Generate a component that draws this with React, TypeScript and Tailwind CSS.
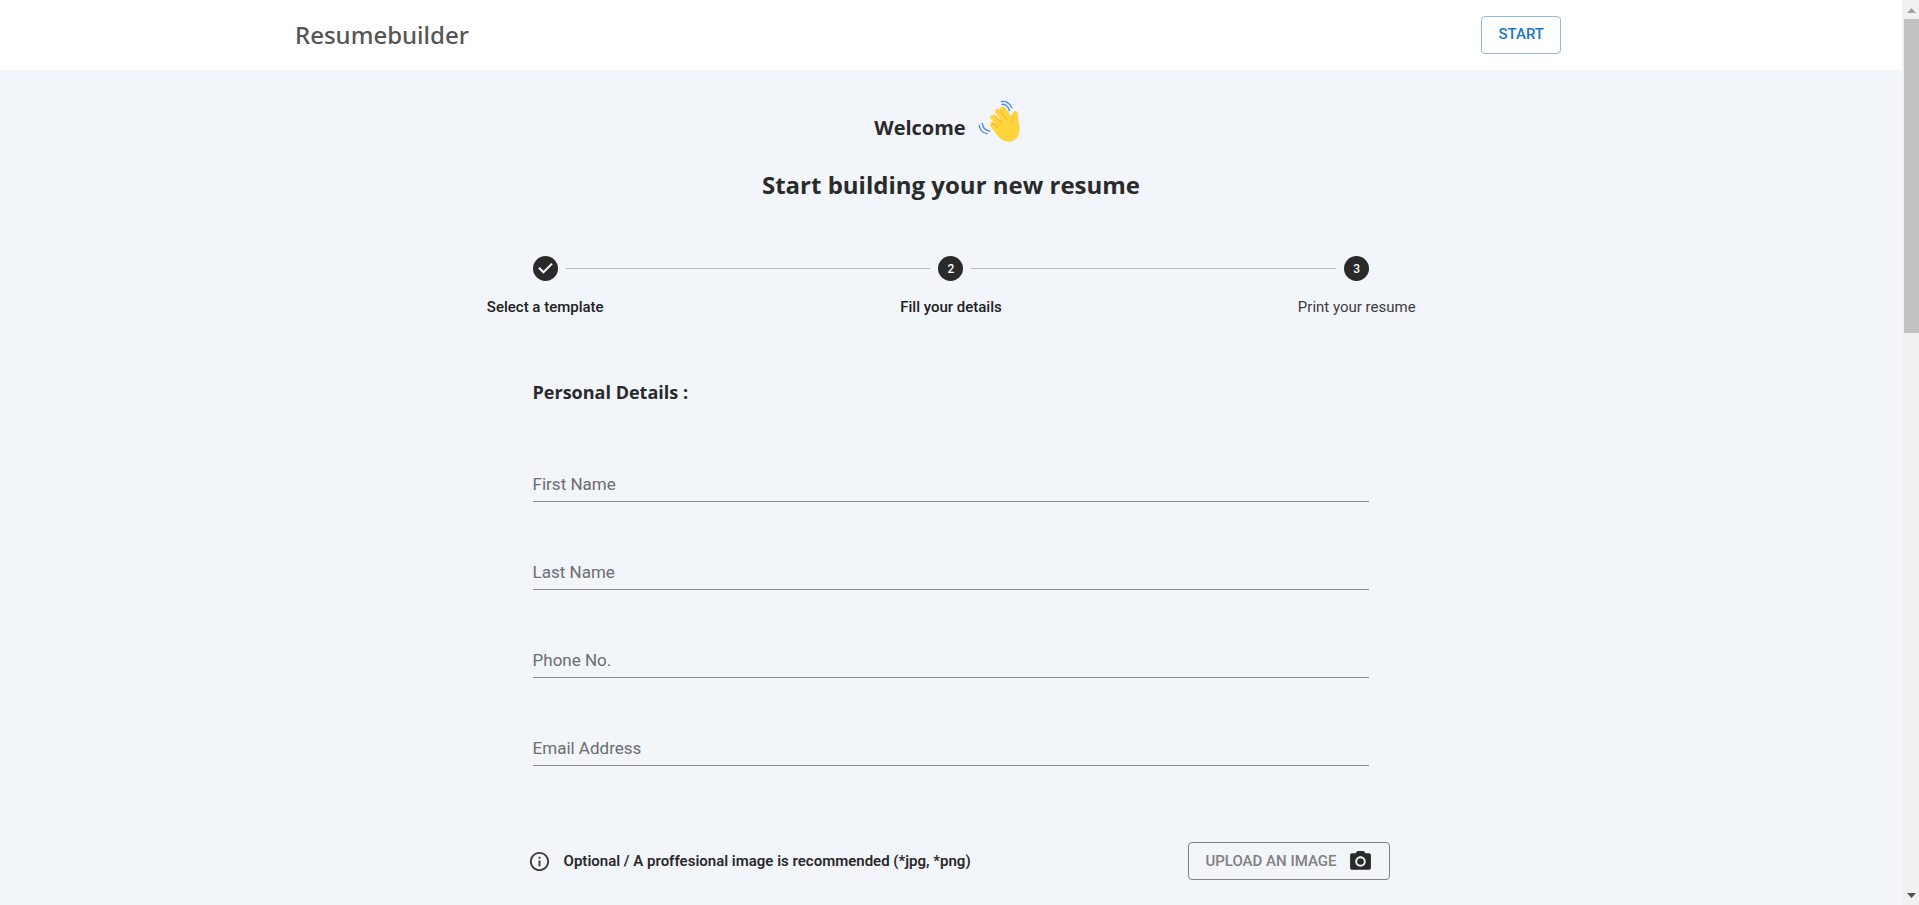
import { MdCameraAlt, MdInfoOutline } from "react-icons/md";

function WavingHand() {
  return (
    <svg viewBox="24 28 132 132" className="size-11" aria-hidden="true" fill="none" strokeLinecap="round">
      <g stroke="#ffd43d" strokeWidth="16">
        <path d="M68 106 104 138" />
        <path d="M69 84 112 124" />
        <path d="M83 66 122 112" />
        <path d="M99 58 130 104" />
        <path d="M136 72 138 112" />
      </g>
      <path
        d="M64 112 90 86 124 82 128 100C126 86 130 78 134 76L144 80C143 95 150 106 149 122C148 144 133 157 113 156C96 155 84 142 64 112Z"
        fill="#ffd43d"
      />
      <g stroke="#ffb62e" strokeWidth="4">
        <path d="M66 99 82 113" />
        <path d="M75 79 93 98" />
        <path d="M90 62 107 86" />
        <path d="M128 76C125 84 127 93 125 98" />
      </g>
      <g stroke="#4a8af4" strokeWidth="4">
        <path d="M94 36C106 33 120 41 126 54" />
        <path d="M96 44C106 42 115 51 118 63" />
        <path d="M28 107C28 119 38 131 52 132" />
        <path d="M37 101C38 113 47 122 59 125" />
      </g>
    </svg>
  );
}

const steps = ["Select a template", "Fill your details", "Print your resume"];

function StepIcon({ index }: { index: number }) {
  if (index === 0) {
    return (
      <svg viewBox="0 0 24 24" className="size-[25px]" fill="#2a2a2a" aria-hidden="true">
        <path d="M12 0a12 12 0 1 0 0 24 12 12 0 0 0 0-24zm-2 17l-5-5 1.4-1.4 3.6 3.6 7.6-7.6L19 8l-9 9z" />
      </svg>
    );
  }
  return (
    <span className="flex size-[25px] items-center justify-center rounded-full bg-[#2a2a2a] text-xs font-medium text-white">
      {index + 1}
    </span>
  );
}

function Stepper() {
  return (
    <ol className="mx-auto mt-[53px] grid w-[64%] grid-cols-3">
      {steps.map((label, i) => (
        <li key={label} className="flex flex-col items-center gap-4">
          <div className="flex w-full items-center gap-2">
            <span className={i > 0 ? "h-px flex-1 bg-[#b6bdbf]" : "h-px flex-1"} />
            <StepIcon index={i} />
            <span className={i < 2 ? "h-px flex-1 bg-[#b6bdbf]" : "h-px flex-1"} />
          </div>
          <span className={i < 2 ? "text-[15px] leading-5 font-medium text-[#212121]" : "text-[15px] leading-5 text-[#3c3c3c]"}>
            {label}
          </span>
        </li>
      ))}
    </ol>
  );
}

const fields = [
  { id: "firstName", label: "First Name", type: "text" },
  { id: "lastName", label: "Last Name", type: "text" },
  { id: "phone", label: "Phone No.", type: "tel" },
  { id: "email", label: "Email Address", type: "email" },
];

function Scrollbar() {
  return (
    <div className="sticky top-0 flex h-screen w-[17px] shrink-0 flex-col items-end bg-[#f1f1f1]" aria-hidden="true">
      <svg viewBox="0 0 15 19" className="h-[19px] w-[15px]" fill="#a3a3a3">
        <path d="M3 13 7.500 8 12 13Z" />
      </svg>
      <div className="h-[314px] w-[15px] bg-[#c1c1c1]" />
      <svg viewBox="0 0 15 17" className="mt-auto h-[17px] w-[15px]" fill="#505050">
        <path d="M3 5 7.500 10 12 5Z" />
      </svg>
    </div>
  );
}

export default function App() {
  return (
    <div className="flex min-h-screen bg-[#f2f5fa] font-['Roboto',sans-serif] text-[#2a2a2a]">
      <div className="min-w-0 flex-1">
        <header className="flex h-[70px] items-center justify-between bg-white pr-[341px] pl-[295px]">
          <a href="#" className="font-['Noto_Sans',sans-serif] text-2xl font-medium text-[#555]">
            Resumebuilder
          </a>
          <button className="h-[38px] rounded border border-[#8cbae8] px-4 pb-0.5 text-[15px] font-medium text-[#1976d2]">
            START
          </button>
        </header>

        <main>
          <div className="mt-[29px] flex items-center justify-center gap-3 pr-1.5 font-['Open_Sans',sans-serif]">
            <p className="pt-3.5 text-xl font-bold">Welcome</p>
            <WavingHand />
          </div>
          <h1 className="mt-6 text-center font-['Open_Sans',sans-serif] text-2xl leading-9 font-bold">
            Start building your new resume
          </h1>

          <Stepper />

          <form className="mx-auto mt-[61px] w-[44%]">
            <h2 className="font-['Open_Sans',sans-serif] text-lg leading-7 font-bold">Personal Details :</h2>
            <div className="mt-[60px] flex flex-col gap-[52px]">
              {fields.map((field) => (
                <input
                  key={field.id}
                  id={field.id}
                  type={field.type}
                  aria-label={field.label}
                  placeholder={field.label}
                  className="h-9 w-full border-b border-[#8b8d90] bg-transparent text-[17px] outline-none placeholder:text-[#6b6d70]"
                />
              ))}
            </div>
            <div className="mt-[76px] -mr-[21px] -ml-[5px] flex items-center justify-between">
              <p className="flex items-center gap-[13px] text-[15px] font-semibold">
                <MdInfoOutline className="size-[23px] text-[#3c3c3c]" />
                Optional / A proffesional image is recommended (*jpg, *png)
              </p>
              <button
                type="button"
                className="flex h-[38px] items-center gap-3 rounded border border-[#808184] px-4 text-[15px] font-medium text-[#808080]"
              >
                UPLOAD AN IMAGE
                <MdCameraAlt className="size-[25px] text-[#2a2a2a]" />
              </button>
            </div>
          </form>
        </main>
      </div>
      <Scrollbar />
    </div>
  );
}
